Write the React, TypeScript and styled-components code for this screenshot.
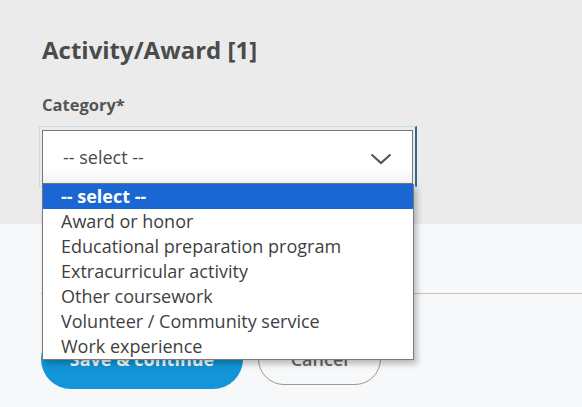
import styled, { createGlobalStyle } from "styled-components";

const Global = createGlobalStyle`
  body {
    margin: 0;
    background: #f7f8fa;
    font-family: "Open Sans", "Noto Sans", sans-serif;
    color: #4a4a4a;
  }
`;

const Page = styled.div`
  width: 582px;
  height: 407px;
  overflow: hidden;
  background: #f7f8fa;
`;

// parte cinza do topo
const Top = styled.section`
  background: #ebebeb;
  padding: 34px 40px 37px 42px;
`;

const Heading = styled.h2`
  margin: 0 0 29px;
  font-size: 24px;
  font-weight: 700;
  line-height: 32px;
  color: #4b4b4b;
`;

const Label = styled.div`
  font-size: 16.5px;
  font-weight: 700;
  color: #555;
  line-height: 20px;
  margin-bottom: 11px;
`;

// anel de foco em volta do select
const Field = styled.div`
  position: relative;
  width: 378px;
  box-sizing: border-box;
  margin-left: -3px;
  padding: 3px 2px 2px 2px;
  border: 1px solid #c9dbe6;
  border-right: 2px solid #2b6a94;
`;

const SelectBox = styled.div`
  height: 54px;
  box-sizing: border-box;
  background: linear-gradient(#fff 70%, #f3f3f3);
  border: 1px solid #767676;
  display: flex;
  align-items: center;
  justify-content: space-between;
  padding: 0 20px;
  font-size: 18px;
  color: #4a4a4a;
`;

const Chevron = styled.svg`
  width: 22px;
  height: 12px;
  margin-top: 4px;
`;

const Menu = styled.ul`
  position: absolute;
  left: 2px;
  top: 57px;
  width: 372px;
  box-sizing: border-box;
  margin: 0;
  padding: 0;
  list-style: none;
  background: #fff;
  border: 1px solid #7a7a7a;
  border-top: none;
  box-shadow: 3px 4px 6px rgba(0, 0, 0, 0.25);
  z-index: 2;
`;

const Option = styled.li<{ $active?: boolean }>`
  height: 25px;
  line-height: 25px;
  padding-left: 18px;
  font-size: 18px;
  white-space: nowrap;
  font-weight: ${(p) => (p.$active ? 700 : 400)};
  color: ${(p) => (p.$active ? "#fff" : "#3f3f3f")};
  background: ${(p) => (p.$active ? "#1a66d2" : "transparent")};
`;

const Bottom = styled.section`
  padding: 69px 0 0 41px;
`;

const Divider = styled.hr`
  margin: 0;
  border: none;
  border-top: 1px solid #c4c4c4;
`;

const Actions = styled.div`
  display: flex;
  align-items: center;
  gap: 15px;
  margin-top: 35px;
`;

const Button = styled.button<{ $primary?: boolean }>`
  font-family: inherit;
  font-size: 18px;
  font-weight: ${(p) => (p.$primary ? 700 : 600)};
  height: ${(p) => (p.$primary ? "60px" : "52px")};
  width: ${(p) => (p.$primary ? "202px" : "123px")};
  border-radius: 30px;
  border: ${(p) => (p.$primary ? "none" : "1px solid #9a9a9a")};
  background: ${(p) => (p.$primary ? "#1296d9" : "transparent")};
  color: ${(p) => (p.$primary ? "#fff" : "#666")};
`;

const options = [
  "Award or honor",
  "Educational preparation program",
  "Extracurricular activity",
  "Other coursework",
  "Volunteer / Community service",
  "Work experience",
];

export default function App() {
  return (
    <Page>
      <Global />
      <Top>
        <Heading>Activity/Award [1]</Heading>
        <Label>Category*</Label>
        <Field>
          <SelectBox>
            <span>-- select --</span>
            <Chevron viewBox="0 0 22 12">
              <path d="M1.5 1.5 L11 10 L20.5 1.5" fill="none" stroke="#555" strokeWidth="2.2" />
            </Chevron>
          </SelectBox>
          <Menu>
            <Option $active>-- select --</Option>
            {options.map((o) => (
              <Option key={o}>{o}</Option>
            ))}
          </Menu>
        </Field>
      </Top>
      <Bottom>
        <Divider />
        <Actions>
          <Button $primary>Save &amp; continue</Button>
          <Button>Cancel</Button>
        </Actions>
      </Bottom>
    </Page>
  );
}
